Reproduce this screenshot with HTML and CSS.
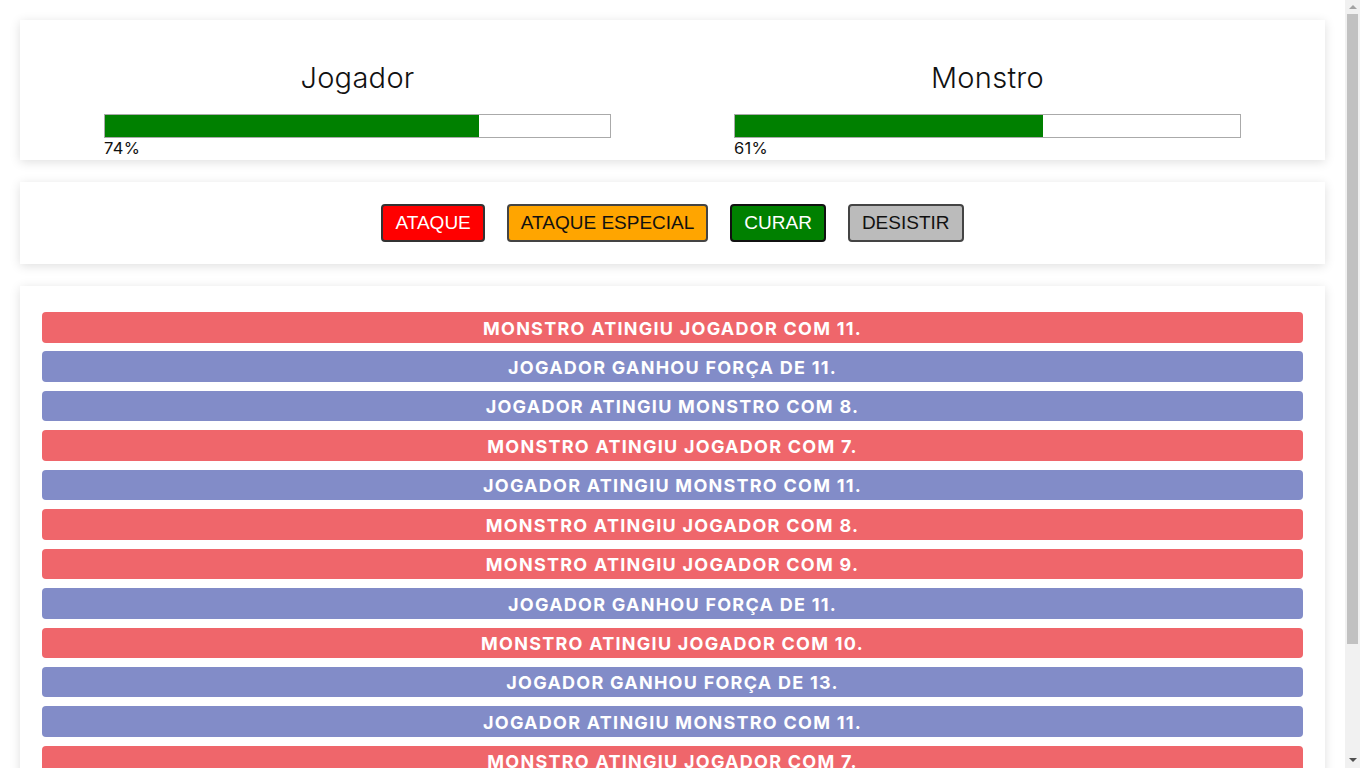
FILE: index.html
```html
<!DOCTYPE html>
<html lang="pt">
<head>
<meta charset="utf-8">
<title>Monster Slayer</title>
<link rel="stylesheet" href="styles.css">
</head>
<body>
<div class="page">
<section class="panel status">
  <div class="fighter">
    <h1 class="fighter-name">Jogador</h1>
    <div class="bar"><div class="bar-fill" style="width: 74%"></div></div>
    <div class="bar-label">74%</div>
  </div>
  <div class="fighter">
    <h1 class="fighter-name">Monstro</h1>
    <div class="bar"><div class="bar-fill" style="width: 61%"></div></div>
    <div class="bar-label">61%</div>
  </div>
</section>
<section class="panel controls">
  <button class="btn btn-attack">ATAQUE</button>
  <button class="btn btn-special">ATAQUE ESPECIAL</button>
  <button class="btn btn-heal">CURAR</button>
  <button class="btn btn-quit">DESISTIR</button>
</section>
<section class="panel log">
  <ul class="log-list">
    <li class="log-item monster">MONSTRO ATINGIU JOGADOR COM 11.</li>
    <li class="log-item player">JOGADOR GANHOU FORÇA DE 11.</li>
    <li class="log-item player">JOGADOR ATINGIU MONSTRO COM 8.</li>
    <li class="log-item monster">MONSTRO ATINGIU JOGADOR COM 7.</li>
    <li class="log-item player">JOGADOR ATINGIU MONSTRO COM 11.</li>
    <li class="log-item monster">MONSTRO ATINGIU JOGADOR COM 8.</li>
    <li class="log-item monster">MONSTRO ATINGIU JOGADOR COM 9.</li>
    <li class="log-item player">JOGADOR GANHOU FORÇA DE 11.</li>
    <li class="log-item monster">MONSTRO ATINGIU JOGADOR COM 10.</li>
    <li class="log-item player">JOGADOR GANHOU FORÇA DE 13.</li>
    <li class="log-item player">JOGADOR ATINGIU MONSTRO COM 11.</li>
    <li class="log-item monster">MONSTRO ATINGIU JOGADOR COM 7.</li>
  </ul>
</section>
</div>
<div class="scrollbar" aria-hidden="true">
  <div class="sb-button sb-up"><span class="arrow-up"></span></div>
  <div class="sb-thumb"></div>
  <div class="sb-track-rest"></div>
  <div class="sb-button sb-down"><span class="arrow-down"></span></div>
</div>
</body>
</html>
```
FILE: styles.css
```css
html, body {
  margin: 0;
  padding: 0;
  height: 100%;
  overflow: hidden;
}
body {
  background: #ffffff;
  font-family: Inter, "Noto Sans", "Liberation Sans", sans-serif;
  color: #111;
  display: flex;
}
.page {
  flex: 1;
  min-width: 0;
  box-sizing: border-box;
  height: 100vh;
  overflow: hidden;
  padding: 20px;
  display: flex;
  flex-direction: column;
  gap: 22px;
}
.scrollbar {
  width: 15px;
  flex-shrink: 0;
  height: 100vh;
  background: #f1f1f1;
  display: flex;
  flex-direction: column;
}
.sb-button {
  height: 14px;
  display: flex;
  justify-content: center;
  flex-shrink: 0;
}
.sb-up {
  align-items: flex-start;
  padding-top: 5px;
  box-sizing: border-box;
}
.sb-down {
  align-items: flex-start;
  padding-top: 4px;
  box-sizing: border-box;
}
.arrow-up {
  width: 0;
  height: 0;
  border-left: 4px solid transparent;
  border-right: 4px solid transparent;
  border-bottom: 4px solid #a3a3a3;
}
.arrow-down {
  width: 0;
  height: 0;
  border-left: 4px solid transparent;
  border-right: 4px solid transparent;
  border-top: 4px solid #505050;
}
.sb-thumb {
  height: 630px;
  margin: 0 2px;
  background: #c1c1c1;
  flex-shrink: 0;
}
.sb-track-rest {
  flex: 1;
}
.panel {
  flex-shrink: 0;
  background: #ffffff;
  box-shadow: 0 2px 10px rgba(0, 0, 0, 0.13);
}
.status {
  display: flex;
  gap: 123px;
  padding: 39px 84px 2px;
}
.fighter {
  flex: 1;
  display: flex;
  flex-direction: column;
}
.fighter-name {
  margin: 0 0 17px;
  font-size: 29px;
  line-height: 38px;
  font-weight: 300;
  text-align: center;
  color: #111;
  letter-spacing: 0.3px;
}
.bar {
  height: 22px;
  border: 1px solid #aaaaaa;
  background: #fff;
}
.bar-fill {
  height: 100%;
  background: #008000;
}
.bar-label {
  font-size: 16.5px;
  line-height: 20px;
  font-weight: 400;
  color: #111;
  letter-spacing: 0.3px;
}
.controls {
  display: flex;
  justify-content: center;
  gap: 22px;
  padding: 22px 0;
}
.btn {
  font-family: "Liberation Sans", Arial, sans-serif;
  font-size: 19px;
  line-height: 22px;
  padding: 6px 12px;
  border: 2px solid #222;
  border-radius: 4px;
  cursor: pointer;
}
.btn-attack { background: #ff0000; color: #fff; border-color: #333; }
.btn-special { background: #ffa500; color: #111; border-color: #444; }
.btn-heal { background: #008000; color: #fff; border-color: #111; }
.btn-quit { background: #bbbbbb; color: #111; border-color: #444; }
.log {
  padding: 26px 22px 22px;
}
.log-list {
  list-style: none;
  margin: 0;
  padding: 0;
  display: flex;
  flex-direction: column;
  gap: 8.95px;
}
.log-item {
  border-radius: 4px;
  color: #fff;
  font-weight: 700;
  font-size: 18px;
  line-height: 22px;
  padding: 5.5px 0 3px;
  text-align: center;
  letter-spacing: 1.25px;
}
.log-item.monster { background: #ef666b; }
.log-item.player { background: #828cc8; }
```
